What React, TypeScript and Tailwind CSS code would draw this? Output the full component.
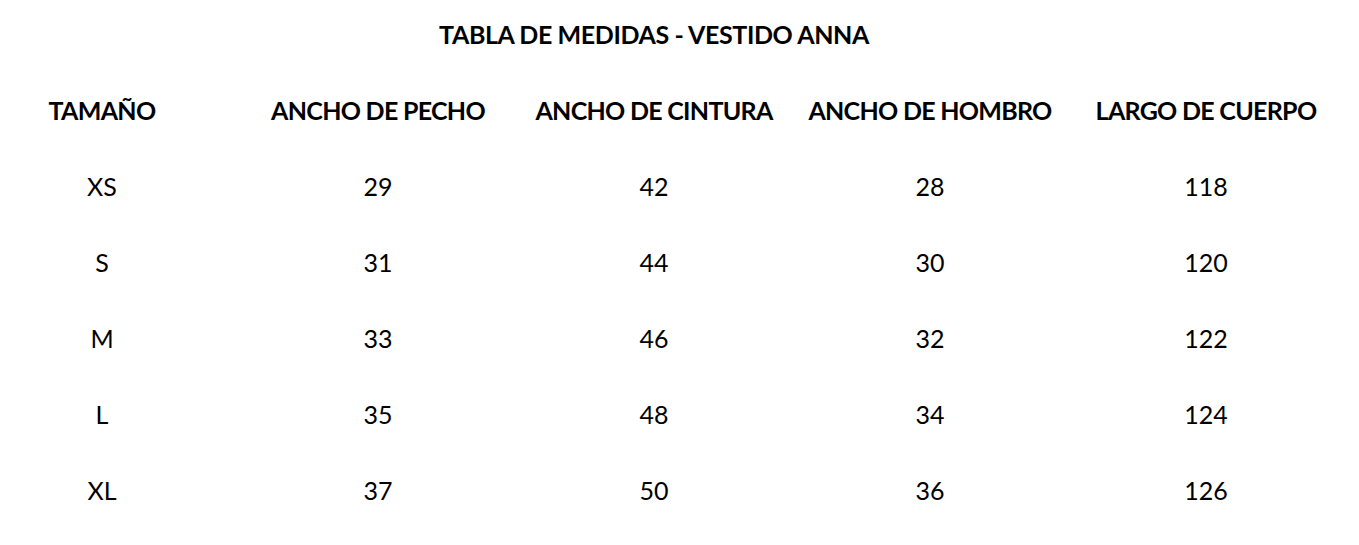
const headers = ['TAMAÑO', 'ANCHO DE PECHO', 'ANCHO DE CINTURA', 'ANCHO DE HOMBRO', 'LARGO DE CUERPO'];

const rows = [
  ['XS', '29', '42', '28', '118'],
  ['S', '31', '44', '30', '120'],
  ['M', '33', '46', '32', '122'],
  ['L', '35', '48', '34', '124'],
  ['XL', '37', '50', '36', '126'],
];

const grid = 'grid grid-cols-[240px_276px_276px_276px_276px] items-center';

function Row({ cells, bold }: { cells: string[]; bold?: boolean }) {
  return (
    <div className={`${grid} h-[76px] ${bold ? 'font-bold tracking-[-0.7px]' : 'font-normal'}`}>
      {cells.map((c, i) => (
        <div key={i} className={`text-center whitespace-nowrap ${i === 0 ? 'pr-[36px]' : ''}`}>
          {c}
        </div>
      ))}
    </div>
  );
}

export default function App() {
  return (
    <div className="w-[1359px] h-[545px] bg-white text-black font-['Lato','Open_Sans',sans-serif] text-[25px] leading-none overflow-hidden">
      <div className={`${grid} h-[72px] pb-[4px] font-bold tracking-[-0.4px]`}>
        <div className="col-start-2 col-span-3 text-center whitespace-nowrap">TABLA DE MEDIDAS - VESTIDO ANNA</div>
      </div>
      <Row cells={headers} bold />
      {rows.map((r) => (
        <Row key={r[0]} cells={r} />
      ))}
    </div>
  );
}
